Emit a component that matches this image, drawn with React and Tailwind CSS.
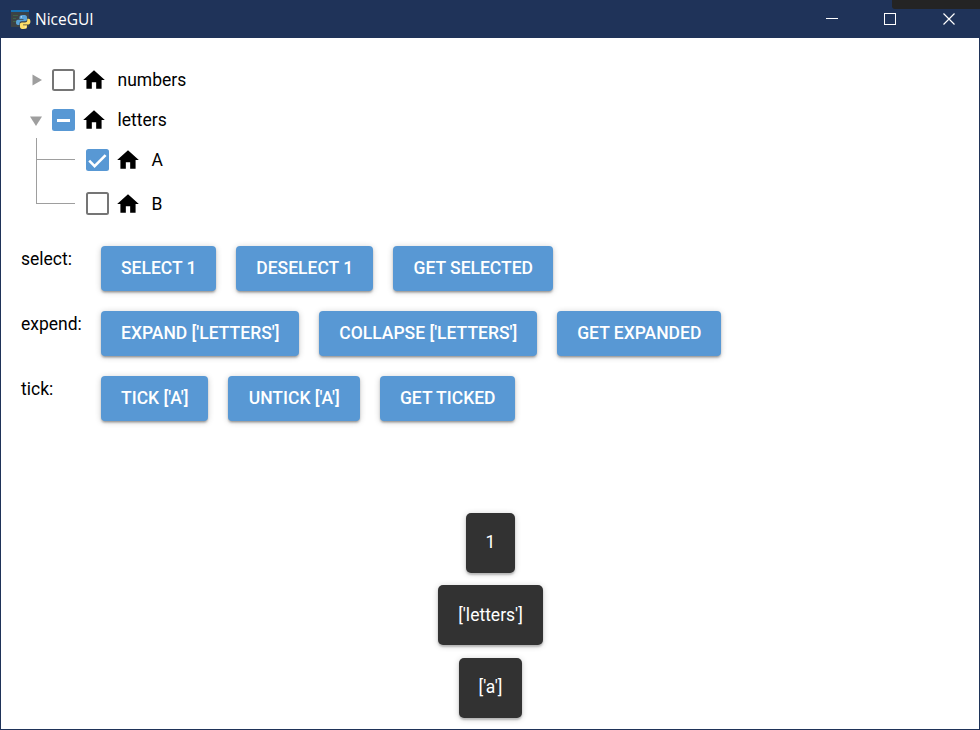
const HomeIcon = () => (
  <svg viewBox="0 0 24 24" className="ml-1.5 h-[26px] w-[26px] shrink-0" fill="#000">
    <path d="M10 20v-6h4v6h5v-8h3L12 3 2 12h3v8z" />
  </svg>
);

function Box({ state, className = "h-[22px]" }) {
  if (state === "none") {
    return <span className={`w-[23px] shrink-0 rounded-[2.5px] border-2 border-[#757575] ${className}`} />;
  }
  return (
    <span className={`flex w-[23px] shrink-0 items-center justify-center rounded-[2.5px] bg-[#5898d4] ${className}`}>
      <svg viewBox="0 0 23 22" className="h-[22px] w-[23px]" fill="none" stroke="#fff">
        {state === "some" ? <path d="M5 11.5H18" strokeWidth="3" /> : <path d="M3.2 11.7L8.6 17.1L19.6 6.1" strokeWidth="2.6" />}
      </svg>
    </span>
  );
}

const Label = ({ children }) => <span className="ml-[10.5px] leading-[26px]">{children}</span>;

function Button({ width, children }) {
  return (
    <button
      className={`flex h-[45px] items-center justify-center rounded-[4px] bg-[#5898d4] pb-px pl-[0.5px] font-medium whitespace-nowrap text-white shadow-[0_1px_6px_rgba(0,0,0,0.2),0_2px_2px_rgba(0,0,0,0.2),0_3px_1px_-2px_rgba(0,0,0,0.12)] ${width}`}
    >
      {children}
    </button>
  );
}

function Row({ label, children }) {
  return (
    <div className="flex h-[45px]">
      <div className="w-[80px] shrink-0 leading-[26px]">{label}</div>
      <div className="flex gap-5">{children}</div>
    </div>
  );
}

function Toast({ className, children }) {
  return (
    <div
      className={`flex h-[60px] items-center justify-center rounded-[5px] bg-[#323232] text-white shadow-[0_1px_6px_rgba(0,0,0,0.2),0_2px_2px_rgba(0,0,0,0.2)] ${className}`}
    >
      {children}
    </div>
  );
}

const AppIcon = () => (
  <svg viewBox="0 0 20 20" className="mt-0.5 h-5 w-5" fill="none">
    <rect x="0" y="0" width="18" height="17" fill="#3c4245" />
    <rect x="0" y="0" width="18" height="2" fill="#1670b4" />
    <path d="M2 5.500h5M2 8.500h3M2 11.500h3" stroke="#3e6247" />
    <path d="M12 5c-3 0-3.500 1-3.500 2.500V9h4v.7H7C5.400 9.700 5 11 5 12.500S5.500 15 7 15h1.500v-1.500c0-1.500 1-2.300 2.300-2.300h3.500c1 0 1.700-.8 1.700-1.700v-2C16 5.600 15 5 12 5z" fill="#5aa3d8" />
    <path d="M12.500 19c3 0 3.500-1 3.500-2.300v-1.500h-4v-.7h5.500c1.300 0 1.900-1.200 1.900-2.900 0-1.700-.5-2.800-1.900-2.800H16.300v1.500c0 1.400-1 2.200-2.300 2.200h-3.300c-1 0-1.700.8-1.700 1.700v2.500c0 1.600 1 2.300 3.500 2.300z" fill="#ffe169" />
    <circle cx="10.300" cy="6.900" r=".6" fill="#fff" />
    <circle cx="14.300" cy="17" r=".6" fill="#fff" />
  </svg>
);

export default function App() {
  return (
    <div className="relative flex h-[730px] w-[980px] flex-col overflow-hidden bg-[#1f3359] font-['Roboto',sans-serif] text-[17.5px] text-black">
      <header className="flex h-[38px] shrink-0 items-center pl-[11px]">
        <AppIcon />
        <span className="ml-1 font-['Open_Sans',sans-serif] text-[15.5px] leading-5 text-white">NiceGUI</span>
        <svg viewBox="0 0 130 14" className="mr-[24px] ml-auto h-[14px] w-[130px]" fill="none" stroke="#fff" shapeRendering="crispEdges">
          <path d="M0 6.500H12" />
          <rect x="58.500" y="1.500" width="11" height="11" />
          <path d="M117.500 1.500l11 11m0-11l-11 11" shapeRendering="auto" strokeWidth="1.200" />
        </svg>
      </header>
      <div className="absolute top-0 right-0 h-[9px] w-[88px] rounded-bl-[3px] bg-[#242424]" />
      <main className="mx-px mb-px flex grow flex-col bg-white pl-5">
        <div className="mt-[22px] flex h-10 items-center pl-[11px]">
          <svg viewBox="0 0 10 12" className="mr-[10px] h-3 w-2.5" fill="#9e9e9e"><path d="M.5 .5V11.500L10 6z" /></svg>
          <Box state="none" />
          <HomeIcon />
          <Label>numbers</Label>
        </div>
        <div className="flex h-[38px] items-center pt-0.5 pl-[9px]">
          <svg viewBox="0 0 12 10" className="mt-px mr-[10px] h-2.5 w-3" fill="#9e9e9e"><path d="M0 .5H12L6 10z" /></svg>
          <Box state="some" />
          <HomeIcon />
          <Label>letters</Label>
        </div>
        <div className="flex h-[22px] items-end pl-[15px]">
          <span className="h-[22px] w-[39px] border-b border-l border-[#9e9e9e]" />
          <div className="-mb-[13px] ml-[11px] flex h-[26px] items-center">
            <Box state="all" />
            <HomeIcon />
            <Label>A</Label>
          </div>
        </div>
        <div className="flex h-[44px] items-end pl-[15px]">
          <span className="h-[44px] w-[39px] border-b border-l border-[#9e9e9e]" />
          <div className="-mb-[13px] ml-[11px] flex h-[26px] items-center">
            <Box state="none" className="mb-px h-[23px]" />
            <HomeIcon />
            <Label>B</Label>
          </div>
        </div>
        <div className="mt-[42px] flex flex-col gap-5">
          <Row label="select:">
            <Button width="w-[115px]">SELECT 1</Button>
            <Button width="w-[137px]">DESELECT 1</Button>
            <Button width="w-[160px]">GET SELECTED</Button>
          </Row>
          <Row label="expend:">
            <Button width="w-[198px]">EXPAND ['LETTERS']</Button>
            <Button width="w-[218px]">COLLAPSE ['LETTERS']</Button>
            <Button width="w-[164px]">GET EXPANDED</Button>
          </Row>
          <Row label="tick:">
            <Button width="w-[107px]">TICK ['A']</Button>
            <Button width="w-[132px]">UNTICK ['A']</Button>
            <Button width="w-[135px]">GET TICKED</Button>
          </Row>
        </div>
        <div className="mt-auto mb-[11px] -ml-5 flex flex-col items-center pl-px">
          <Toast className="mb-3 w-[49px] pb-px">1</Toast>
          <Toast className="mb-[13px] w-[105px]">['letters']</Toast>
          <Toast className="w-[63px] pb-px">['a']</Toast>
        </div>
      </main>
    </div>
  );
}
